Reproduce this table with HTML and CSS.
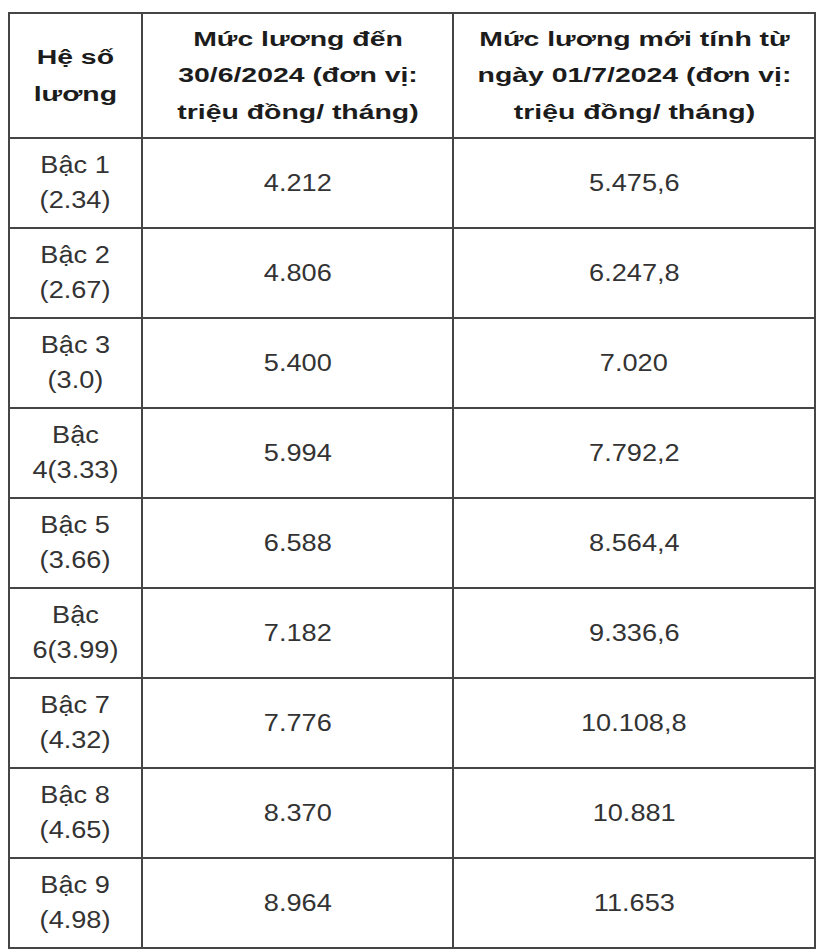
FILE: index.html
```html
<!DOCTYPE html>
<html lang="vi">
<head>
<meta charset="utf-8">
<title>Bảng lương</title>
<link rel="stylesheet" href="styles.css">
</head>
<body>
<table class="salary">
  <colgroup>
    <col class="c1">
    <col class="c2">
    <col class="c3">
  </colgroup>
  <thead>
    <tr class="head">
      <th><span class="hx">Hệ số<br>lương</span></th>
      <th><span class="hx">Mức lương đến<br>30/6/2024 (đơn vị:<br>triệu đồng/ tháng)</span></th>
      <th><span class="hx">Mức lương mới tính từ<br>ngày 01/7/2024 (đơn vị:<br>triệu đồng/ tháng)</span></th>
    </tr>
  </thead>
  <tbody>
    <tr><td><span class="bx">Bậc 1<br>(2.34)</span></td><td><span class="bx">4.212</span></td><td><span class="bx">5.475,6</span></td></tr>
    <tr><td><span class="bx">Bậc 2<br>(2.67)</span></td><td><span class="bx">4.806</span></td><td><span class="bx">6.247,8</span></td></tr>
    <tr><td><span class="bx">Bậc 3<br>(3.0)</span></td><td><span class="bx">5.400</span></td><td><span class="bx">7.020</span></td></tr>
    <tr><td><span class="bx">Bậc<br>4(3.33)</span></td><td><span class="bx">5.994</span></td><td><span class="bx">7.792,2</span></td></tr>
    <tr><td><span class="bx">Bậc 5<br>(3.66)</span></td><td><span class="bx">6.588</span></td><td><span class="bx">8.564,4</span></td></tr>
    <tr><td><span class="bx">Bậc<br>6(3.99)</span></td><td><span class="bx">7.182</span></td><td><span class="bx">9.336,6</span></td></tr>
    <tr><td><span class="bx">Bậc 7<br>(4.32)</span></td><td><span class="bx">7.776</span></td><td><span class="bx">10.108,8</span></td></tr>
    <tr><td><span class="bx">Bậc 8<br>(4.65)</span></td><td><span class="bx">8.370</span></td><td><span class="bx">10.881</span></td></tr>
    <tr><td><span class="bx">Bậc 9<br>(4.98)</span></td><td><span class="bx">8.964</span></td><td><span class="bx">11.653</span></td></tr>
  </tbody>
</table>
</body>
</html>
```
FILE: styles.css
```css
html, body {
  margin: 0;
  padding: 0;
  background: #ffffff;
}
body {
  padding: 12px 0 0 8px;
  font-family: "Liberation Sans", Arial, sans-serif;
}
.salary {
  border-collapse: collapse;
  table-layout: fixed;
  width: 806px;
  border: 2px solid #454545;
}
.c1 { width: 133px; }
.c2 { width: 311px; }
.c3 { width: 362px; }
.salary th,
.salary td {
  border: 2px solid #454545;
  padding: 0;
  text-align: center;
  vertical-align: middle;
}
.head {
  height: 125px;
}
.salary tbody tr {
  height: 90px;
}
.salary th {
  font-weight: bold;
  font-size: 20px;
  line-height: 36.5px;
  color: #1c1c1c;
}
.salary td {
  font-size: 23px;
  line-height: 35px;
  color: #333333;
}
.hx {
  display: inline-block;
  transform: scaleX(1.42);
}
.bx {
  display: inline-block;
  transform: scaleX(1.18);
}
```
